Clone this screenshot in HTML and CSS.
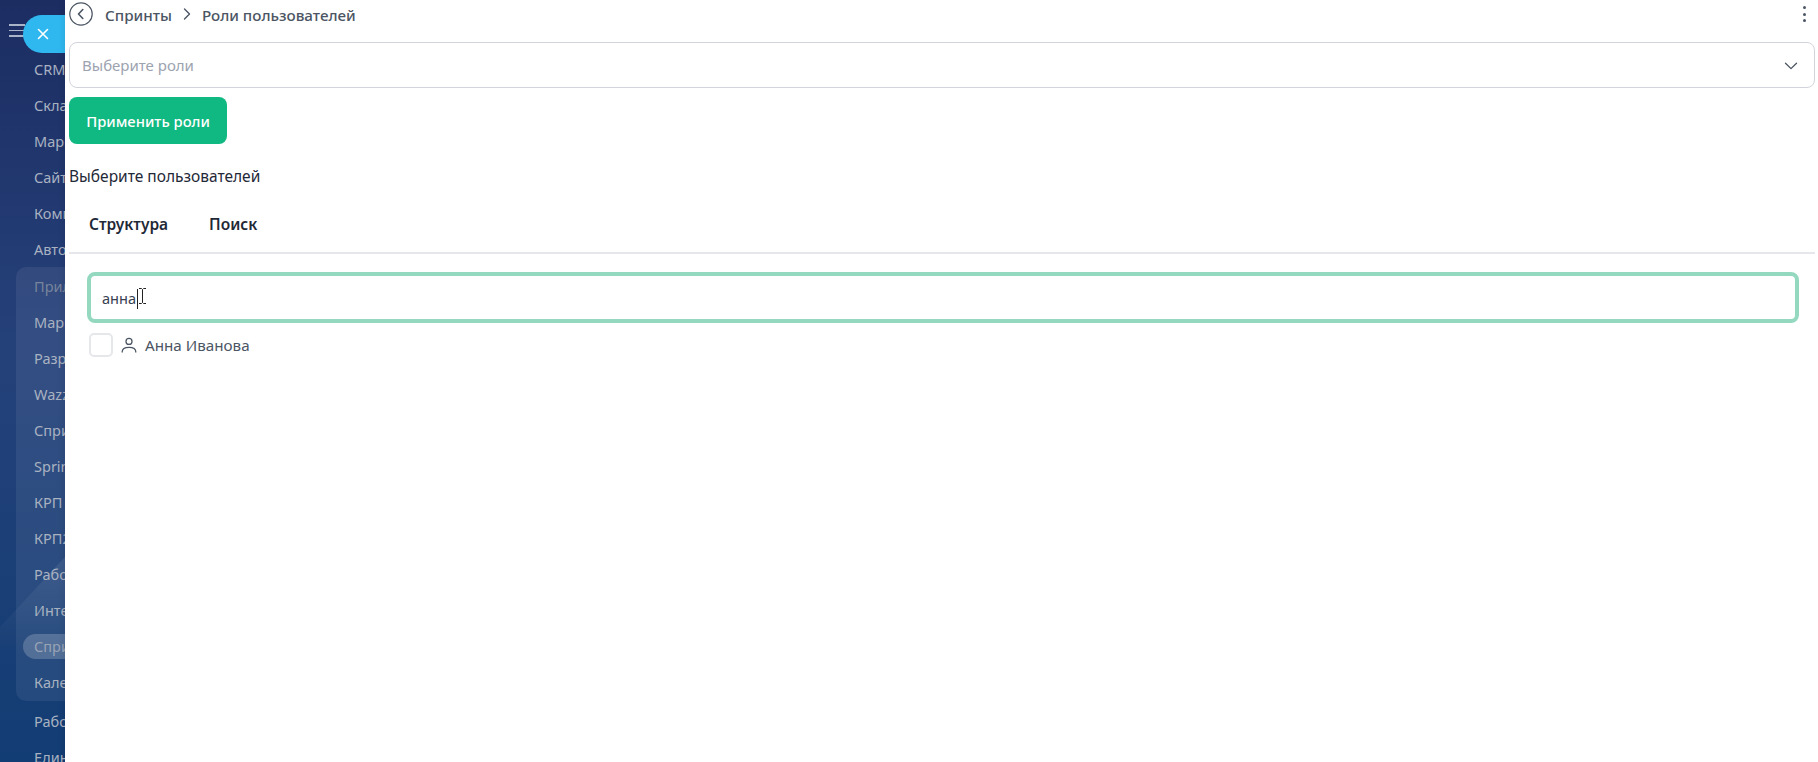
FILE: index.html
```html
<!DOCTYPE html>
<html lang="ru">
<head>
  <meta charset="UTF-8" />
  <meta name="viewport" content="width=device-width, initial-scale=1.0"/>
  <title>Роли пользователей</title>
  <link rel="stylesheet" href="styles.css">
</head>
<body>
  <div class="app">
    <aside class="sidebar">
      <div class="burger"><span></span><span></span><span></span></div>
      <nav class="menu">
        <a class="menu-item">CRM</a>
        <a class="menu-item">Склад</a>
        <a class="menu-item">Маркетинг</a>
        <a class="menu-item">Сайты</a>
        <a class="menu-item">Компания</a>
        <a class="menu-item">Автоматизация</a>
        <div class="menu-group">
          <a class="menu-item menu-title">Приложения</a>
          <a class="menu-item">Маркет</a>
          <a class="menu-item">Разработчикам</a>
          <a class="menu-item">Wazzup</a>
          <a class="menu-item">Спринты</a>
          <a class="menu-item">Sprint</a>
          <a class="menu-item">КРП</a>
          <a class="menu-item">КРП2</a>
          <a class="menu-item">Работа</a>
          <a class="menu-item">Интеграции</a>
          <a class="menu-item active">Спринты</a>
          <a class="menu-item">Календарь</a>
        </div>
        <a class="menu-item">Работа</a>
        <a class="menu-item">Единый</a>
      </nav>
    </aside>

    <button class="close-pill" aria-label="Закрыть">
      <svg width="14" height="14" viewBox="0 0 14 14" fill="none" stroke="#fff" stroke-width="1.6" stroke-linecap="round"><path d="M2.5 2.5l9 9M11.5 2.5l-9 9"/></svg>
    </button>

    <main class="panel">
      <div class="topbar">
        <span class="back">
          <svg width="24" height="24" viewBox="0 0 24 24" fill="none" stroke="#4b5563" stroke-width="1.2"><circle cx="12" cy="12" r="11.2"/><path d="M13.8 7.5L9.5 12l4.3 4.5" stroke-width="1.6" stroke-linecap="round" stroke-linejoin="round"/></svg>
        </span>
        <span class="crumb">Спринты</span>
        <svg class="crumb-sep" width="8" height="12" viewBox="0 0 8 12" fill="none" stroke="#4b5563" stroke-width="1.4" stroke-linecap="round" stroke-linejoin="round"><path d="M1.5 1l5 5-5 5"/></svg>
        <span class="crumb">Роли пользователей</span>
        <span class="dots"><i></i><i></i><i></i></span>
      </div>

      <div class="select">
        <span class="select-placeholder">Выберите роли</span>
        <svg class="select-arrow" width="14" height="8" viewBox="0 0 14 8" fill="none" stroke="#4b5563" stroke-width="1.3" stroke-linecap="round" stroke-linejoin="round"><path d="M1.5 1.2L7 6.6l5.5-5.4"/></svg>
      </div>

      <button class="apply-btn">Применить роли</button>

      <div class="users-label">Выберите пользователей</div>

      <div class="tabs">
        <span class="tab">Структура</span>
        <span class="tab">Поиск</span>
      </div>

      <div class="search-pane">
        <div class="search-input">
          <span class="search-value">анна</span><span class="caret"></span>
          <svg class="ibeam" width="9" height="16" viewBox="0 0 9 16" fill="none" stroke="#222" stroke-width="1"><path d="M1 .5h2.5l1 1 1-1H8M4.500 1.500v13M1 15.500h2.500l1-1 1 1H8"/></svg>
        </div>
        <label class="user-row">
          <span class="checkbox"></span>
          <svg width="16" height="16" viewBox="0 0 18 18" fill="none" stroke="#4b5563" stroke-width="1.400" stroke-linecap="round"><circle cx="9" cy="5" r="3.400"/><path d="M1.300 17c0-3.500 2.800-5.200 7.700-5.200s7.700 1.700 7.700 5.200"/></svg>
          <span class="user-name">Анна Иванова</span>
        </label>
      </div>
    </main>
  </div>
</body>
</html>
```

FILE: styles.css
```css
html, body {
  margin: 0;
  height: 100%;
  overflow: hidden;
}

body {
  font-family: "Noto Sans", "Open Sans", sans-serif;
  font-size: 15px;
  color: #1f2937;
  background: #fff;
}

.app {
  display: flex;
  height: 762px;
  position: relative;
}

/* --- Sidebar --- */
.sidebar {
  width: 65px;
  flex-shrink: 0;
  overflow: hidden;
  position: relative;
  background: linear-gradient(180deg, #1c2d62 0%, #25417a 45%, #123d74 100%);
}

.sidebar::before {
  content: "";
  position: absolute;
  left: 0;
  top: 557px;
  width: 65px;
  height: 130px;
  background: linear-gradient(180deg, rgba(255,255,255,.09), rgba(255,255,255,0) 75%);
  clip-path: polygon(0 70px, 65px 0, 65px 130px, 0 130px);
}

.burger {
  position: absolute;
  left: 9px;
  top: 24px;
  display: flex;
  flex-direction: column;
  gap: 4px;
}

.burger span {
  display: block;
  width: 16px;
  height: 1.500px;
  background: #aab4c8;
}

.menu {
  position: relative;
  padding-top: 51px;
  white-space: nowrap;
}

.menu-item {
  display: block;
  height: 36px;
  line-height: 36px;
  padding-left: 34px;
  font-size: 14.500px;
  color: #a9b2c1;
}

.menu-group {
  margin: 0 0 2px 16px;
  padding: 1px 0;
  width: 120px;
  border-radius: 10px;
  background: rgba(255,255,255,.07);
}

.menu-group .menu-item {
  padding-left: 18px;
}

.menu-group .menu-title {
  color: #77849c;
}

.menu-group .active {
  height: 25px;
  line-height: 25px;
  margin: 6px 0 5px 7px;
  padding-left: 11px;
  border-radius: 13px;
  color: #98a3b5;
  background: rgba(255,255,255,.2);
}

.close-pill {
  position: absolute;
  left: 23px;
  top: 15px;
  width: 60px;
  height: 38px;
  padding: 0 0 0 13px;
  border: none;
  border-radius: 19px 0 0 19px;
  background: #2fb8f0;
  display: flex;
  align-items: center;
}

/* --- Panel --- */
.panel {
  flex: 1;
  min-width: 0;
  position: relative;
  background: #fff;
  padding: 0 3px 0 4px;
  box-shadow: -2px 0 6px rgba(0,0,0,.08);
}

.topbar {
  height: 28px;
  display: flex;
  align-items: center;
  gap: 11px;
  color: #4b5563;
}

.back {
  display: flex;
  margin-right: 1px;
}

.crumb {
  font-size: 15.200px;
  font-weight: 500;
  color: #4b5563;
  padding-top: 1px;
}

.dots {
  margin-left: auto;
  margin-right: 9px;
  display: flex;
  flex-direction: column;
  gap: 3.500px;
}

.dots i {
  display: block;
  width: 3px;
  height: 3px;
  border-radius: 50%;
  background: #4b5563;
}

.select {
  margin-top: 14px;
  height: 46px;
  box-sizing: border-box;
  border: 1px solid #d1d5db;
  border-radius: 8px;
  padding: 0 16px 0 12px;
  display: flex;
  align-items: center;
  justify-content: space-between;
}

.select-placeholder {
  color: #9ca3af;
}

.select-arrow {
  margin-top: 2px;
}

.apply-btn {
  display: block;
  margin-top: 9px;
  width: 158px;
  height: 47px;
  padding: 0;
  border: none;
  border-radius: 8px;
  background: #10b981;
  color: #fff;
  font-family: inherit;
  font-size: 14.800px;
  font-weight: 500;
}

.users-label {
  margin-top: 22px;
  line-height: 20px;
  font-size: 15.500px;
  color: #1f2937;
}

.tabs {
  margin-top: 18px;
  display: flex;
  gap: 41px;
  height: 50px;
  padding: 10px 20px 0;
  box-sizing: border-box;
  border-bottom: 2px solid #e5e7eb;
  line-height: 20px;
}

.tab {
  font-size: 15.500px;
  font-weight: 600;
  color: #1f2937;
}

.search-pane {
  padding: 18px 16px 0 18px;
}

.search-input {
  height: 51px;
  box-sizing: border-box;
  border: 4px solid #93d8bf;
  border-radius: 8px;
  padding: 0 12px 0 11px;
  display: flex;
  align-items: center;
  color: #374151;
}

.search-value {
  font-size: 14.600px;
  padding-top: 1px;
}

.caret {
  width: 1px;
  height: 20px;
  background: #222;
  margin-left: 1px;
  margin-top: 2px;
}

.ibeam {
  margin-top: -3px;
}

.user-row {
  margin-top: 10px;
  padding-left: 2px;
  display: flex;
  align-items: center;
  gap: 8px;
  color: #4b5563;
}

.checkbox {
  width: 24px;
  height: 24px;
  box-sizing: border-box;
  border: 2px solid #e5e7eb;
  border-radius: 5px;
  background: #fff;
}

.user-name {
  font-size: 15.200px;
}
```
